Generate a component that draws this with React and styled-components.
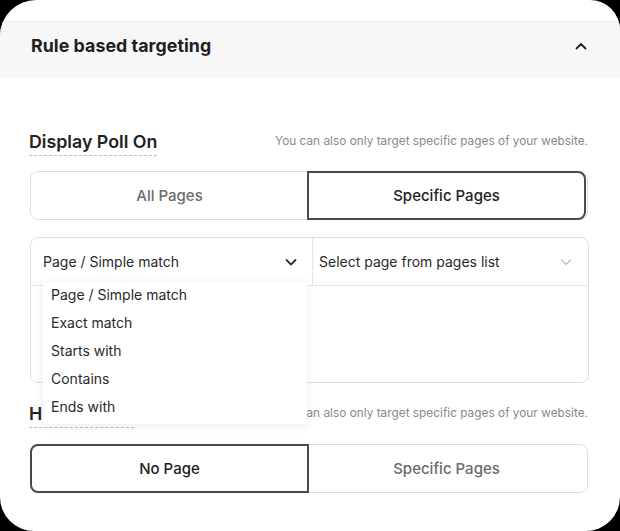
import React from "react";
import styled, { createGlobalStyle } from "styled-components";

const Global = createGlobalStyle`
    html, body {
        margin: 0;
        padding: 0;
        background: #000;
    }
    body {
        font-family: Inter, "Noto Sans", "Liberation Sans", sans-serif;
        color: #222;
    }
`;

const Card = styled.div`
    width: 620px;
    height: 531px;
    background: #fff;
    border-radius: 36px 30px 34px 34px;
    overflow: hidden;
    display: flex;
    flex-direction: column;
`;

const Header = styled.div`
    margin-top: 21px;
    height: 57px;
    background: #f7f7f7;
    border-top: 1px solid #ebebeb;
    padding: 0 32px 9px 31px;
    box-sizing: border-box;
    display: flex;
    align-items: center;
    justify-content: space-between;
`;

const Title = styled.div`
    font-size: 17.8px;
    font-weight: 700;
    color: #1f1f1f;
    letter-spacing: 0.05px;
`;

const Body = styled.div`
    padding: 0 32px 0 30px;
`;

const HeadRow = styled.div`
    display: flex;
    align-items: flex-start;
    justify-content: space-between;
    margin-top: ${(p) => p.$top}px;
`;

const Heading = styled.div`
    margin-left: -1px;
    font-size: 17.8px;
    font-weight: 600;
    color: #222;
    padding-bottom: 3px;
    border-bottom: 1px dashed #bdbdbd;
    line-height: 20px;
`;

const Hint = styled.div`
    font-size: 11.85px;
    color: #8a8a8a;
    margin-top: 2px;
`;

const Segmented = styled.div`
    margin-top: ${(p) => p.$top}px;
    height: 49px;
    display: flex;
    border: 1px solid #dedede;
    border-radius: 8px;
    box-sizing: border-box;
`;

const Segment = styled.div`
    flex: 0 0 calc(50% + 1px);
    box-sizing: border-box;
    display: flex;
    align-items: center;
    justify-content: center;
    font-size: 15px;
    font-weight: 500;
    margin: -1px;
    color: ${(p) => (p.$active ? "#222" : "#6b6b6b")};
    border: ${(p) => (p.$active ? "2px solid #4a4a4a" : "none")};
    border-radius: ${(p) => (p.$side === "left" ? "8px 0 0 8px" : "0 8px 8px 0")};
`;

const SelectBox = styled.div`
    position: relative;
    margin-top: 17px;
    height: 146px;
    border: 1px solid #dedede;
    border-radius: 8px;
    box-sizing: border-box;
    margin-right: -1px;
`;

const SelectRow = styled.div`
    display: flex;
    height: 47px;
    border-bottom: 1px solid #e3e3e3;
`;

const Field = styled.div`
    display: flex;
    align-items: center;
    justify-content: space-between;
    width: ${(p) => (p.$w ? `${p.$w}px` : "auto")};
    flex: ${(p) => (p.$w ? "none" : 1)};
    padding: 0 ${(p) => p.$pr}px 0 ${(p) => p.$pl}px;
    box-sizing: border-box;
    font-size: 14px;
    color: #2a2a2a;
    border-right: ${(p) => (p.$divider ? "1px solid #e3e3e3" : "none")};
`;

const Menu = styled.ul`
    position: absolute;
    left: 12px;
    top: 44px;
    width: 264px;
    margin: 0;
    padding: 0 0 2px;
    list-style: none;
    background: #fff;
    box-shadow: 0 2px 10px rgba(0, 0, 0, 0.08);
    z-index: 2;
`;

const MenuItem = styled.li`
    height: 28px;
    line-height: 26px;
    padding-left: 8px;
    font-size: 14px;
    color: #2a2a2a;
`;

const Chevron = ({ up, color = "#333", w = 1.8 }) => (
    <svg width="14" height="14" viewBox="0 0 14 14" fill="none">
        <path
            d={up ? "M2.5 9.5 L7 5 L11.5 9.5" : "M2.5 5 L7 9.5 L11.5 5"}
            stroke={color}
            strokeWidth={w}
            strokeLinecap="round"
            strokeLinejoin="round"
        />
    </svg>
);

const options = ["Page / Simple match", "Exact match", "Starts with", "Contains", "Ends with"];
const hint = "You can also only target specific pages of your website.";

const App = () => {
    return (
        <>
            <Global />
            <Card>
                <Header>
                    <Title>Rule based targeting</Title>
                    <Chevron up color="#222" />
                </Header>
                <Body>
                    <HeadRow $top={54}>
                        <Heading>Display Poll On</Heading>
                        <Hint>{hint}</Hint>
                    </HeadRow>
                    <Segmented $top={15}>
                        <Segment $side="left">All Pages</Segment>
                        <Segment $side="right" $active>
                            Specific Pages
                        </Segment>
                    </Segmented>
                    <SelectBox>
                        <SelectRow>
                            <Field $w={282} $pl={12} $pr={14} $divider>
                                Page / Simple match
                                <Chevron />
                            </Field>
                            <Field $pl={6} $pr={15}>
                                Select page from pages list
                                <Chevron color="#c4c4c4" w={1.4} />
                            </Field>
                        </SelectRow>
                        <Menu>
                            {options.map((o) => (
                                <MenuItem key={o}>{o}</MenuItem>
                            ))}
                        </Menu>
                    </SelectBox>
                    <HeadRow $top={21}>
                        <Heading>Hide Poll On</Heading>
                        <Hint>{hint}</Hint>
                    </HeadRow>
                    <Segmented $top={16}>
                        <Segment $side="left" $active>
                            No Page
                        </Segment>
                        <Segment $side="right">Specific Pages</Segment>
                    </Segmented>
                </Body>
            </Card>
        </>
    );
};

export default App;
